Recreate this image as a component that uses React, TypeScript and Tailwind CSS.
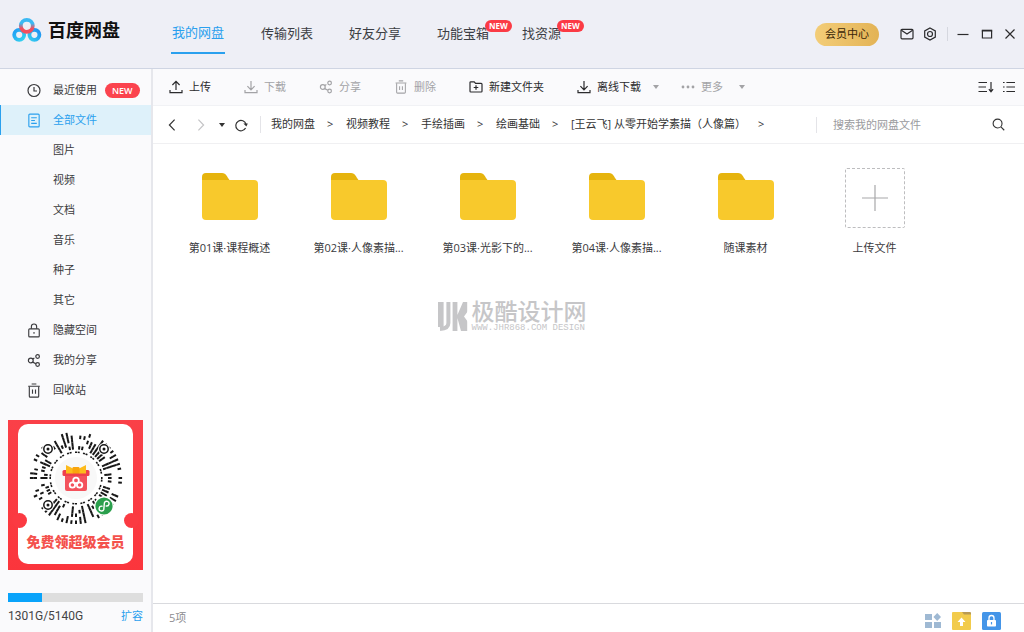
import React from 'react';

type IconProps = { className?: string };

const stroke = {
    fill: 'none',
    stroke: 'currentColor',
    strokeWidth: 1.2,
} as const;

const CloudLogo: React.FC<IconProps> = ({ className }) => (
    <svg className={className} viewBox="0 0 30 26" fill="none" aria-hidden="true">
        <defs>
            <linearGradient id="ringLeft" x1="0" y1="0" x2="1" y2="1">
                <stop offset="0" stopColor="#1f9df5" />
                <stop offset="1" stopColor="#35d3ee" />
            </linearGradient>
            <linearGradient id="ringRight" x1="0" y1="1" x2="1" y2="0">
                <stop offset="0" stopColor="#36cdf0" />
                <stop offset="1" stopColor="#1e8ff2" />
            </linearGradient>
            <linearGradient id="ringTop" x1="0" y1="0" x2="0" y2="1">
                <stop offset="0.3" stopColor="#3bb9f3" />
                <stop offset="0.7" stopColor="#f2505f" />
            </linearGradient>
        </defs>
        <circle cx="7.2" cy="17.8" r="5" stroke="url(#ringLeft)" strokeWidth="3.8" />
        <circle cx="22.4" cy="17.8" r="5" stroke="url(#ringRight)" strokeWidth="3.8" />
        <circle cx="14.8" cy="8.8" r="6" stroke="url(#ringTop)" strokeWidth="3.8" />
    </svg>
);

const ClockIcon: React.FC<IconProps> = ({ className }) => (
    <svg className={className} viewBox="0 0 14 14" {...stroke}>
        <circle cx="7" cy="7" r="6" />
        <path d="M7 3.5V7.5H10" />
    </svg>
);

const DocIcon: React.FC<IconProps> = ({ className }) => (
    <svg className={className} viewBox="0 0 14 16" {...stroke}>
        <rect x="1.5" y="1.2" width="11" height="13.6" rx="1" />
        <path d="M4 5H10M4 8H8M4 11H10" />
    </svg>
);

const LockIcon: React.FC<IconProps> = ({ className }) => (
    <svg className={className} viewBox="0 0 14 16" {...stroke}>
        <rect x="1.4" y="6.2" width="11.2" height="8.6" rx="1" />
        <path d="M4.2 6.2V3.8a2.8 2.8 0 0 1 5.6 0V6.2M7 9.5V11.5" />
    </svg>
);

const ShareIcon: React.FC<IconProps> = ({ className }) => (
    <svg className={className} viewBox="0 0 14 14" {...stroke}>
        <circle cx="3.8" cy="7" r="2.4" />
        <circle cx="10.6" cy="3" r="1.8" />
        <circle cx="10.6" cy="11" r="1.8" />
        <path d="M5.8 5.4L7.4 4.4M5.8 8.6L8.8 10.2" />
    </svg>
);

const TrashIcon: React.FC<IconProps> = ({ className }) => (
    <svg className={className} viewBox="0 0 14 16" {...stroke}>
        <path d="M0.8 3.4H13.2M4.5 1H9.5" />
        <path d="M2 3.6V14a1 1 0 0 0 1 1H11a1 1 0 0 0 1-1V3.6M5.4 7V11.4M8.6 7V11.4" />
    </svg>
);

const UploadIcon: React.FC<IconProps> = ({ className }) => (
    <svg className={className} viewBox="0 0 14 14" {...stroke}>
        <path d="M7 10V1.6M3.4 5L7 1.4L10.6 5M1 10V12.6H13V10" />
    </svg>
);

const DownloadIcon: React.FC<IconProps> = ({ className }) => (
    <svg className={className} viewBox="0 0 14 14" {...stroke}>
        <path d="M7 1V9.6M3.4 6.2L7 9.8L10.6 6.2M1 10V12.6H13V10" />
    </svg>
);

const NewFolderIcon: React.FC<IconProps> = ({ className }) => (
    <svg className={className} viewBox="0 0 14 14" {...stroke}>
        <path d="M1 11.2V2.6a0.8 0.8 0 0 1 0.8-0.8H5.2L6.6 3.4H12.2a0.8 0.8 0 0 1 0.8 0.8V11.2a0.8 0.8 0 0 1-0.8 0.8H1.8a0.8 0.8 0 0 1-0.8-0.8zM7 5.2V9.8M4.7 7.5H9.3" />
    </svg>
);

const DotsIcon: React.FC<IconProps> = ({ className }) => (
    <svg className={className} viewBox="0 0 14 14" fill="currentColor">
        <circle cx="2" cy="7" r="1.4" />
        <circle cx="7" cy="7" r="1.4" />
        <circle cx="12" cy="7" r="1.4" />
    </svg>
);

const Caret: React.FC<IconProps> = ({ className }) => (
    <svg className={className} viewBox="0 0 6 4" fill="currentColor">
        <path d="M0 0H6L3 4z" />
    </svg>
);

const MainFolder: React.FC<IconProps> = ({ className }) => (
    <svg className={className} viewBox="0 0 56 47">
        <path d="M0 12V4a4 4 0 0 1 4-4H20c4.5 0 5 4 7.5 7v5z" fill="#e6b40d" />
        <path d="M0 7H52a4 4 0 0 1 4 4V43a4 4 0 0 1-4 4H4a4 4 0 0 1-4-4z" fill="#f8c92c" />
    </svg>
);

// Round mini-program code: short dashes laid out along rays
const rays = Array.from({ length: 60 }, (_, i) => i);
const rings = [25, 28.5, 32, 35.5, 39, 42.5];

const isFilled = (ray: number, ring: number) => {
    if (ring === 0) return ray % 3 !== 2;
    const n = Math.sin(ray * 12.9898 + ring * 78.233) * 43758.5453;
    return n - Math.floor(n) > 0.5;
};

const QrCode: React.FC<IconProps> = ({ className }) => (
    <svg className={className} viewBox="0 0 96 96" role="img" aria-label="小程序码">
        <g stroke="#161616" strokeWidth="2">
            {rays.map(ray =>
                rings.map((r, ring) =>
                    isFilled(ray, ring) ? (
                        <line
                            key={`${ray}-${ring}`}
                            x1="48"
                            x2="48"
                            y1={48 - r}
                            y2={48 - r - (ring === 0 ? 1.6 : 3.6)}
                            transform={`rotate(${ray * 6} 48 48)`}
                        />
                    ) : null
                )
            )}
        </g>
        {[[20, 19], [76, 19], [20, 75]].map(([x, y]) => (
            <g key={`${x}-${y}`}>
                <circle cx={x} cy={y} r="6" fill="#fff" />
                <circle cx={x} cy={y} r="4.2" fill="none" stroke="#161616" strokeWidth="1.5" />
                <circle cx={x} cy={y} r="1.5" fill="#161616" />
            </g>
        ))}
        <circle cx="76" cy="76" r="10" fill="#fff" />
        <circle cx="76" cy="76" r="8.6" fill="#2a9f4c" />
        <path
            d="M74 76.2a2.4 2.4 0 1 0 1.8 3.2L76.4 72.8a2.4 2.4 0 1 1 1.8 3.2"
            fill="none"
            stroke="#fff"
            strokeWidth="1.4"
            strokeLinecap="round"
        />
        <circle cx="48" cy="48" r="21" fill="#f8f8f8" />
        <path d="M37 45H59V59a2 2 0 0 1-2 2H39a2 2 0 0 1-2-2z" fill="#f4525c" />
        <rect x="34.5" y="40" width="27" height="6" rx="1.5" fill="#ef3f4c" />
        <path d="M48 40L38 35V43.5H45zM48 40L58 35V43.5H51z" fill="#fdbb1c" />
        <rect x="44.5" y="37" width="7" height="6.5" rx="1" fill="#f9a50d" />
        <g fill="none" stroke="#fff" strokeWidth="1.8">
            <circle cx="48" cy="50.4" r="2.8" />
            <circle cx="44.4" cy="55" r="2.7" />
            <circle cx="51.6" cy="55" r="2.7" />
        </g>
    </svg>
);

const sidebarItems: { label: string; icon?: React.FC<IconProps>; active?: boolean; isNew?: boolean }[] = [
    { label: '最近使用', icon: ClockIcon, isNew: true },
    { label: '全部文件', icon: DocIcon, active: true },
    { label: '图片' },
    { label: '视频' },
    { label: '文档' },
    { label: '音乐' },
    { label: '种子' },
    { label: '其它' },
    { label: '隐藏空间', icon: LockIcon },
    { label: '我的分享', icon: ShareIcon },
    { label: '回收站', icon: TrashIcon },
];

const crumbs = ['我的网盘', '视频教程', '手绘插画', '绘画基础', '[王云飞] 从零开始学素描（人像篇）'];

const folders = ['第01课·课程概述', '第02课·人像素描...', '第03课·光影下的...', '第04课·人像素描...', '随课素材'];

const storage = { used: 1301, total: 5140 };

const NavBadge: React.FC = () => (
    <span className="absolute -top-1 left-full -ml-1 flex h-3 items-center rounded-full bg-[#fb3b45] px-1 text-[8px] leading-3 font-bold text-white">
        NEW
    </span>
);

const ToolButton: React.FC<{ label: string; icon: React.FC<IconProps>; muted?: boolean }> = ({ label, icon: Icon, muted }) => (
    <button type="button" className={`flex items-center gap-1.5 whitespace-nowrap ${muted ? 'text-[#a3a3a6]' : 'text-[#2b2b2d]'}`}>
        <Icon className="size-3.5" />
        {label}
    </button>
);

const Header: React.FC = () => (
    <header className="flex h-[69px] shrink-0 items-center border-b border-[#cfd5e3] bg-[#eeeff6] text-[13px]">
        <div className="flex w-[171px] shrink-0 items-center gap-1.5 pb-2 pl-3">
            <CloudLogo className="h-[26px] w-[30px]" />
            <span className="text-lg font-bold text-[#111]">百度网盘</span>
        </div>
        <nav className="flex items-center gap-9 self-stretch whitespace-nowrap text-[#3c3e44]">
            <a href="#disk" className="mt-3.5 mb-3.5 flex items-center self-stretch border-b-2 border-[#2aa0ee] px-px text-[#2aa0ee]">我的网盘</a>
            <a href="#transfer">传输列表</a>
            <a href="#friends">好友分享</a>
            <div className="flex gap-[33px]">
                <a href="#tools" className="relative">功能宝箱<NavBadge /></a>
                <a href="#resources" className="relative">找资源<NavBadge /></a>
            </div>
        </nav>
        <div className="ml-auto flex items-center pr-2 text-[#2b2b2d]">
            <button type="button" className="mr-[21px] h-[23px] rounded-full bg-gradient-to-r from-[#f3cd78] to-[#e3b355] px-2.5 text-[11px] whitespace-nowrap text-[#3a2608]">
                会员中心
            </button>
            <button type="button" aria-label="消息" className="mr-[9px]">
                <svg className="size-3.5" viewBox="0 0 14 14" {...stroke}>
                    <rect x="1" y="2.4" width="12" height="9.4" rx="1" />
                    <path d="M1.4 3.2L7 7L12.6 3.2" />
                </svg>
            </button>
            <button type="button" aria-label="设置" className="mr-2.5">
                <svg className="size-3.5" viewBox="0 0 14 14" {...stroke}>
                    <path d="M7 0.9L12.3 3.9V10.1L7 13.1L1.7 10.1V3.9z" />
                    <circle cx="7" cy="7" r="2.5" />
                </svg>
            </button>
            <span className="mr-[9px] h-3.5 w-px bg-[#d5d7df]" />
            <button type="button" aria-label="最小化" className="mr-3">
                <svg className="size-3" viewBox="0 0 12 12" {...stroke}><path d="M0.5 6.5H11.5" /></svg>
            </button>
            <button type="button" aria-label="最大化" className="mr-[11px]">
                <svg className="size-3" viewBox="0 0 12 12" {...stroke}><path d="M1.4 2.4V10H10.6V2.4" /><path d="M0.8 2.6H11.2" strokeWidth="1.8" /></svg>
            </button>
            <button type="button" aria-label="关闭">
                <svg className="size-3" viewBox="0 0 12 12" {...stroke}><path d="M1.5 1.5L10.5 10.5M10.5 1.5L1.5 10.5" /></svg>
            </button>
        </div>
    </header>
);

const Promo: React.FC = () => (
    <a href="#vip" className="relative mx-2 mt-[15px] block overflow-hidden bg-gradient-to-b from-[#fa4048] to-[#fb353c] px-2.5 pt-1 pb-1.5">
        <div className="flex flex-col items-center rounded-[10px] bg-white pt-1.5 pb-2.5">
            <QrCode className="size-24" />
            <span className="mt-1 text-[14px] leading-6 font-black whitespace-nowrap text-[#f4524d]">免费领超级会员</span>
        </div>
        <span className="absolute top-[93px] left-1 size-[15px] rounded-full bg-[#fb3a42]" />
        <span className="absolute top-[93px] right-1 size-[15px] rounded-full bg-[#fb3a42]" />
    </a>
);

const Sidebar: React.FC = () => (
    <aside className="flex w-[153px] shrink-0 flex-col border-r-2 border-[#e6e7ec] bg-[#fafafc] pt-1.5">
        <nav>
            {sidebarItems.map(({ label, icon: Icon, active, isNew }) => (
                <a
                    key={label}
                    href={`#${label}`}
                    className={`flex h-[30px] items-center border-l pl-[26px] ${active ? 'border-[#2aa0ee] bg-[#def1fa] text-[#2aa0ee]' : 'border-transparent text-[#3a3a3d]'}`}
                >
                    <span className="mr-3 flex w-3.5 justify-center">{Icon && <Icon className="h-[15px] w-3.5" />}</span>
                    {label}
                    {isNew && <span className="ml-2 rounded-full bg-[#fb434e] px-[7px] text-[9px] leading-[15px] font-semibold text-white">NEW</span>}
                </a>
            ))}
        </nav>
        <Promo />
        <div className="mx-2 mt-auto pb-1.5">
            <div
                role="progressbar"
                aria-label="容量"
                aria-valuenow={storage.used}
                aria-valuemax={storage.total}
                className="h-[9px] bg-[#dedede]"
            >
                <div className="h-full bg-[#09a3fa]" style={{ width: `${(storage.used / storage.total) * 100}%` }} />
            </div>
            <div className="mt-1 flex items-center justify-between leading-5">
                <span className="font-['Roboto',sans-serif] text-[12px] text-[#444]">{storage.used}G/{storage.total}G</span>
                <a href="#expand" className="text-[#2aa0ee]">扩容</a>
            </div>
        </div>
    </aside>
);

const Toolbar: React.FC = () => (
    <div className="flex h-[37px] shrink-0 items-center gap-[33px] border-b border-[#f1f2f5] bg-[#fafafc] pr-2 pl-4">
        <ToolButton label="上传" icon={UploadIcon} />
        <ToolButton label="下载" icon={DownloadIcon} muted />
        <ToolButton label="分享" icon={ShareIcon} muted />
        <ToolButton label="删除" icon={TrashIcon} muted />
        <ToolButton label="新建文件夹" icon={NewFolderIcon} />
        <div className="flex items-center gap-3 text-[#a3a3a6]">
            <ToolButton label="离线下载" icon={DownloadIcon} />
            <Caret className="mr-2.5 h-1 w-1.5" />
            <ToolButton label="更多" icon={DotsIcon} muted />
            <Caret className="ml-1 h-1 w-1.5" />
        </div>
        <div className="ml-auto flex items-center gap-2 text-[#2b2b2d]">
            <button type="button" aria-label="排序">
                <svg className="h-3.5 w-4" viewBox="0 0 16 14" {...stroke}>
                    <path d="M0.5 2.5H9M0.5 7H8M0.5 11.5H9M13 2V12M10.9 9.2L13 11.8L15.1 9.2" />
                </svg>
            </button>
            <button type="button" aria-label="列表视图">
                <svg className="size-3.5" viewBox="0 0 14 14" {...stroke}>
                    <path d="M1 2.5H2.6M1 7H2.6M1 11.5H2.6M4.4 2.5H13M4.4 7H13M4.4 11.5H13" />
                </svg>
            </button>
        </div>
    </div>
);

const PathBar: React.FC = () => (
    <div className="flex h-[38px] shrink-0 items-center border-b border-[#f0f0f2] pl-3 text-[#333]">
        <button type="button" aria-label="后退" className="mr-[15px]">
            <svg className="size-3.5" viewBox="0 0 14 14" {...stroke}><path d="M9.6 1.6L4.4 7L9.6 12.4" /></svg>
        </button>
        <button type="button" aria-label="前进" className="mr-[11px] text-[#c4c4c6]">
            <svg className="size-3.5" viewBox="0 0 14 14" {...stroke}><path d="M4.4 1.6L9.6 7L4.4 12.4" /></svg>
        </button>
        <button type="button" aria-label="历史" className="mr-[9px]"><Caret className="h-1 w-1.5" /></button>
        <button type="button" aria-label="刷新" className="mr-3">
            <svg className="size-3.5" viewBox="0 0 14 14" {...stroke}>
                <path d="M11.6 10A5.2 5.2 0 1 1 12 6.2" />
                <path d="M9.4 5.4H13.8L12.4 8.4z" fill="currentColor" stroke="none" />
            </svg>
        </button>
        <nav className="flex items-center gap-3 border-l border-[#e4e4e8] pl-2.5 whitespace-nowrap">
            {crumbs.map(crumb => (
                <React.Fragment key={crumb}>
                    <a href={`#${crumb}`}>{crumb}</a>
                    <span className="w-[7px]">&gt;</span>
                </React.Fragment>
            ))}
        </nav>
        <label className="ml-auto flex w-[208px] items-center border-l border-[#e4e4e8] pr-[19px] pl-4">
            <input
                type="text"
                aria-label="搜索"
                placeholder="搜索我的网盘文件"
                className="min-w-0 flex-1 leading-4 outline-none placeholder:text-[#9a9a9d]"
            />
            <svg className="size-[13px]" viewBox="0 0 14 14" {...stroke}>
                <circle cx="6" cy="6" r="4.8" />
                <path d="M9.6 9.6L13.2 13.2" />
            </svg>
        </label>
    </div>
);

const Files: React.FC = () => (
    <div className="flex flex-1 flex-wrap content-start pt-6 pl-3 text-[#3a3a3d]">
        {folders.map(name => (
            <a key={name} href={`#${name}`} className="flex w-[129px] flex-col items-center gap-2.5">
                <span className="flex h-[60px] items-center pb-1">
                    <MainFolder className="h-[47px] w-[56px]" />
                </span>
                <span className="leading-5">{name}</span>
            </a>
        ))}
        <button type="button" className="flex w-[129px] flex-col items-center gap-2.5">
            <span className="flex size-[60px] items-center justify-center rounded-[2px] border border-dashed border-[#bdbdbf]">
                <svg className="size-[26px] text-[#a8a8aa]" viewBox="0 0 26 26" {...stroke}><path d="M13 0V26M0 13H26" /></svg>
            </span>
            <span className="leading-5">上传文件</span>
        </button>
    </div>
);

const StatusBar: React.FC = () => (
    <footer className="flex h-[29px] shrink-0 items-center border-t border-[#d9dade] pr-[23px] pl-4 text-[#8c8c8f]">
        <span>{folders.length}项</span>
        <div className="ml-auto flex items-center gap-[11px] pt-1.5">
            <button type="button" aria-label="应用">
                <svg className="size-4" viewBox="0 0 16 16" fill="#9fb9d3">
                    <path d="M0 1H7V7H0zM0 9H7V15H0zM9 9H16V15H9zM12.2 0L16 4L12.2 8L8.4 4z" />
                </svg>
            </button>
            <button type="button" aria-label="上传文件夹">
                <svg className="h-[18px] w-[19px]" viewBox="0 0 19 18">
                    <path d="M10 0H18a1 1 0 0 1 1 1V5H10z" fill="#b99a52" />
                    <path d="M1 0H10L12 2.4H19V17a1 1 0 0 1-1 1H1a1 1 0 0 1-1-1V1a1 1 0 0 1 1-1z" fill="#f2cb4b" />
                    <path d="M9.5 5.5L13.5 10H11V14H8V10H5.5z" fill="#fff" />
                </svg>
            </button>
            <button type="button" aria-label="锁定">
                <svg className="h-[18px] w-[19px]" viewBox="0 0 19 18">
                    <rect width="19" height="18" rx="1.5" fill="#4495e8" />
                    <rect x="5" y="8" width="9" height="6.5" rx="0.8" fill="#fff" />
                    <path d="M7 8V6a2.5 2.5 0 0 1 5 0V8" fill="none" stroke="#fff" strokeWidth="1.3" />
                    <path d="M9.5 10V12.4" stroke="#4495e8" strokeWidth="1.2" />
                </svg>
            </button>
        </div>
    </footer>
);

const Watermark: React.FC = () => (
    <div className="pointer-events-none absolute inset-0 flex items-center justify-center gap-1 text-[#c6c6c8]">
        <svg className="h-[29px] w-[30px]" viewBox="0 0 30 29" aria-hidden="true">
            <rect width="5.6" height="25" fill="currentColor" />
            <path d="M10.4 0V21Q10.4 26.6 2 27" fill="none" stroke="currentColor" strokeWidth="4" />
            <rect x="14.6" width="14.6" height="29" fill="currentColor" />
            <path d="M19.4 0V13L25 0zM19.4 16V29H23zM30 9L26 14.5L30 20z" fill="#fff" />
        </svg>
        <div className="flex flex-col gap-0.5">
            <span className="text-[23px] leading-[22px] font-medium">极酷设计网</span>
            <span className="font-['Liberation_Mono',monospace] text-[9px] leading-[8px]">WWW.JHR868.COM DESIGN</span>
        </div>
    </div>
);

const App: React.FC = () => {
    return (
        <div className="relative flex min-h-screen flex-col bg-white font-['Open_Sans','Noto_Sans_CJK_SC',sans-serif] text-[11px]">
            <Header />
            <div className="flex flex-1">
                <Sidebar />
                <main className="flex min-w-0 flex-1 flex-col">
                    <Toolbar />
                    <PathBar />
                    <Files />
                    <StatusBar />
                </main>
            </div>
            <Watermark />
        </div>
    );
};

export default App;
